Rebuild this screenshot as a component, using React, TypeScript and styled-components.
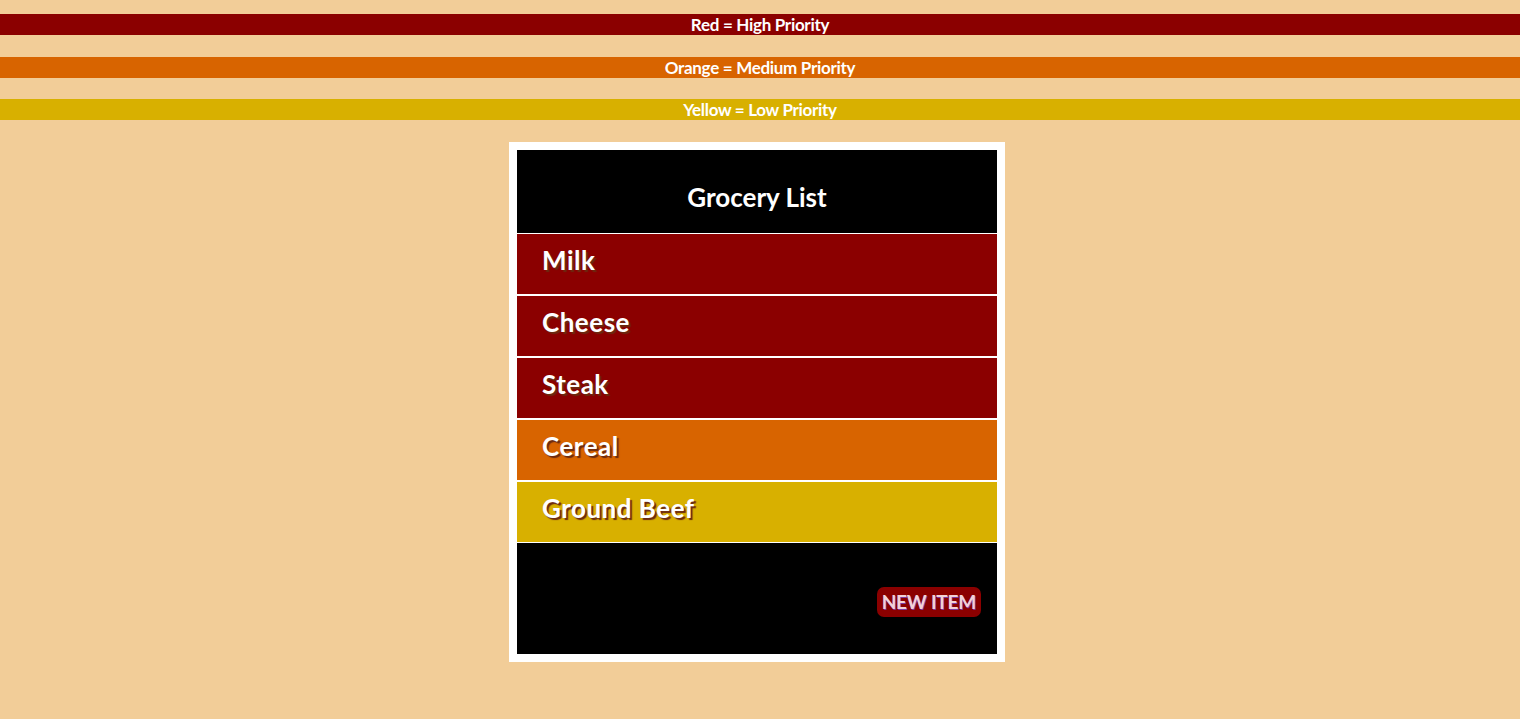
import styled, { createGlobalStyle } from "styled-components"

const GlobalStyle = createGlobalStyle`
  html, body {
    margin: 0;
    padding: 0;
    background: #f2cd98;
    font-family: Futura, "Century Gothic", Lato, "Liberation Sans", sans-serif;
  }
`

const Page = styled.div`
  padding-top: 14px;
  min-height: 719px;
  box-sizing: border-box;
`

const Legend = styled.div<{ $bg: string }>`
  background: ${(p) => p.$bg};
  color: #fff;
  font-weight: 700;
  font-size: 17px;
  line-height: 21px;
  height: 21px;
  text-align: center;
  margin-bottom: 21.5px;
  letter-spacing: -0.3px;
  &:last-of-type {
    margin-bottom: 20.5px;
  }
`

const Card = styled.div`
  width: 480px;
  margin-left: calc(50% - 251px);
  border: 8px solid #fff;
  background: #000;
`

const Header = styled.h1`
  margin: 0;
  height: 83px;
  box-sizing: border-box;
  padding-top: 32px;
  color: #fff;
  font-size: 26px;
  font-weight: 700;
  line-height: 30px;
  text-align: center;
`

const List = styled.ul`
  list-style: none;
  margin: 0;
  padding: 0;
`

const Item = styled.li<{ $bg: string }>`
  background: ${(p) => p.$bg};
  border-top: 1px solid #fff;
  border-bottom: 1px solid #fff;
  padding: 9px 25px 0;
  height: 51px;
  color: #fff;
  font-size: 26px;
  font-weight: 700;
  line-height: 34px;
  letter-spacing: 0.5px;
  text-shadow: 2px 2px 1px #6b2a10;
`

const Footer = styled.div`
  height: 111px;
  display: flex;
  justify-content: flex-end;
  align-items: flex-end;
  padding: 0 16px 37px;
  box-sizing: border-box;
`

const NewButton = styled.button`
  background: #8b0000;
  border: none;
  border-radius: 7px;
  color: #f2d2d6;
  font-family: inherit;
  font-size: 19px;
  font-weight: 700;
  height: 30px;
  padding: 0 5px;
  line-height: 30px;
  letter-spacing: -0.2px;
  text-shadow: 1px 1px 0 #7a3aa0;
  cursor: pointer;
`

const RED = "#8b0000"
const ORANGE = "#d86400"
const YELLOW = "#d8b000"

const items = [
  { name: "Milk", color: RED },
  { name: "Cheese", color: RED },
  { name: "Steak", color: RED },
  { name: "Cereal", color: ORANGE },
  { name: "Ground Beef", color: YELLOW },
]

export default function App() {
  return (
    <>
      <GlobalStyle />
      <Page>
        <Legend $bg={RED}>Red = High Priority</Legend>
        <Legend $bg={ORANGE}>Orange = Medium Priority</Legend>
        <Legend $bg={YELLOW}>Yellow = Low Priority</Legend>
        <Card>
          <Header>Grocery List</Header>
          <List>
            {items.map((it) => (
              <Item key={it.name} $bg={it.color}>
                {it.name}
              </Item>
            ))}
          </List>
          <Footer>
            <NewButton>NEW ITEM</NewButton>
          </Footer>
        </Card>
      </Page>
    </>
  )
}
